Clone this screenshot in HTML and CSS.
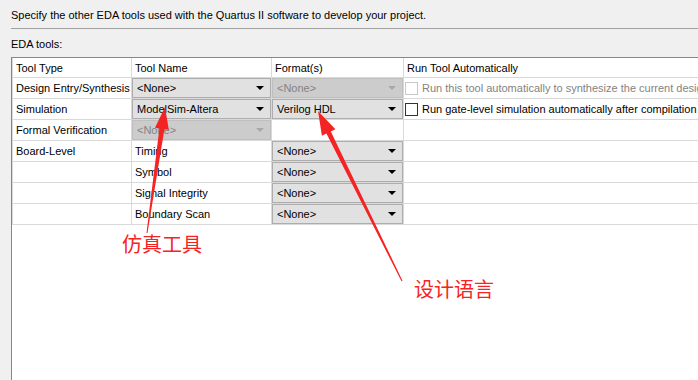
FILE: index.html
```html
<!DOCTYPE html>
<html lang="en">
<head>
  <meta charset="UTF-8" />
  <title>EDA Tool Settings</title>
  <link rel="stylesheet" href="styles.css">
</head>
<body>

  <p class="intro">Specify the other EDA tools used with the Quartus II software to develop your project.</p>
  <div class="rule"></div>
  <p class="section-label">EDA tools:</p>

  <div class="panel">
    <div class="grid">
      <div class="cell head">Tool Type</div>
      <div class="cell head">Tool Name</div>
      <div class="cell head">Format(s)</div>
      <div class="cell head">Run Tool Automatically</div>

      <div class="cell">Design Entry/Synthesis</div>
      <div class="cell"><div class="combo">&lt;None&gt;<span class="caret"></span></div></div>
      <div class="cell"><div class="combo disabled">&lt;None&gt;<span class="caret"></span></div></div>
      <div class="cell check-cell disabled-text"><span class="check disabled"></span>Run this tool automatically to synthesize the current design</div>

      <div class="cell">Simulation</div>
      <div class="cell"><div class="combo">ModelSim-Altera<span class="caret"></span></div></div>
      <div class="cell"><div class="combo">Verilog HDL<span class="caret"></span></div></div>
      <div class="cell check-cell"><span class="check"></span>Run gate-level simulation automatically after compilation</div>

      <div class="cell">Formal Verification</div>
      <div class="cell"><div class="combo disabled">&lt;None&gt;<span class="caret"></span></div></div>
      <div class="cell"></div>
      <div class="cell"></div>

      <div class="cell">Board-Level</div>
      <div class="cell">Timing</div>
      <div class="cell"><div class="combo">&lt;None&gt;<span class="caret"></span></div></div>
      <div class="cell"></div>

      <div class="cell"></div>
      <div class="cell">Symbol</div>
      <div class="cell"><div class="combo">&lt;None&gt;<span class="caret"></span></div></div>
      <div class="cell"></div>

      <div class="cell"></div>
      <div class="cell">Signal Integrity</div>
      <div class="cell"><div class="combo">&lt;None&gt;<span class="caret"></span></div></div>
      <div class="cell"></div>

      <div class="cell"></div>
      <div class="cell">Boundary Scan</div>
      <div class="cell"><div class="combo">&lt;None&gt;<span class="caret"></span></div></div>
      <div class="cell"></div>
    </div>
  </div>

  <!-- red annotations drawn over the screenshot -->
  <svg class="arrows" width="698" height="380" viewBox="0 0 698 380">
    <polygon points="146.5,232.9 159.4,128.4 155,127.8 165,107 168.8,129.8 164.4,129.2 147.5,233.1" />
    <polygon points="401.5,281.3 326.4,133.6 321.9,135.8 318,111 335.4,129.2 330.8,131.4 402.5,280.7" />
  </svg>
  <span class="note note-sim">仿真工具</span>
  <span class="note note-lang">设计语言</span>

</body>
</html>
```

FILE: styles.css
```css
body {
  margin: 0;
  height: 380px;
  overflow: hidden;
  background-color: #f0f0f0;
  color: #000;
  font-family: "Liberation Sans", Arial, sans-serif;
  font-size: 11px;
  position: relative;
}

p {
  margin: 0;
}

.intro {
  padding: 8px 0 0 11px;
  line-height: 14px;
}

.rule {
  margin: 6px 0 0 11px;
  border-top: 1px solid #a0a0a0;
}

.section-label {
  margin: 8px 0 6px 11px;
  line-height: 14px;
}

.panel {
  margin-left: 11px;
  height: 323px;
  background-color: #fff;
  border-left: 1px solid #828790;
  border-top: 1px solid #828790;
  overflow: hidden;
}

.grid {
  display: grid;
  grid-template-columns: 118px 139px 131px 400px;
  grid-template-rows: 19px repeat(7, 20px);
  gap: 1px;
  padding: 0 0 1px 1px;
  width: max-content;
  background-color: #d9d9d9;
}

.cell {
  background-color: #fff;
  padding-left: 3px;
  display: flex;
  align-items: center;
  white-space: nowrap;
  overflow: hidden;
}

.cell:has(.combo) {
  padding-left: 0;
}

.combo {
  box-sizing: border-box;
  width: 100%;
  height: 20px;
  display: flex;
  align-items: center;
  justify-content: space-between;
  padding: 0 6px 0 4px;
  background-color: #e1e1e1;
  border: 1px solid #adadad;
}

.caret {
  width: 0;
  height: 0;
  border-left: 4px solid transparent;
  border-right: 4px solid transparent;
  border-top: 4px solid #000;
}

.combo.disabled {
  background-color: #cccccc;
  border-color: #bfbfbf;
  color: #838383;
}

.combo.disabled .caret {
  border-top-color: #a8a8a8;
}

.check-cell {
  padding-left: 1px;
  gap: 4px;
}

.check {
  box-sizing: border-box;
  width: 13px;
  height: 13px;
  background-color: #fff;
  border: 1px solid #333;
  flex: none;
}

.check.disabled {
  border-color: #c8c8c8;
}

.disabled-text {
  color: #838383;
}

.arrows {
  position: absolute;
  left: 0;
  top: 0;
  fill: #f52424;
}

.note {
  position: absolute;
  color: #f52424;
  font-family: "Noto Sans CJK SC", sans-serif;
  font-size: 20px;
  line-height: 24px;
}

.note-sim {
  left: 122px;
  top: 232px;
}

.note-lang {
  left: 414px;
  top: 277px;
}
```
